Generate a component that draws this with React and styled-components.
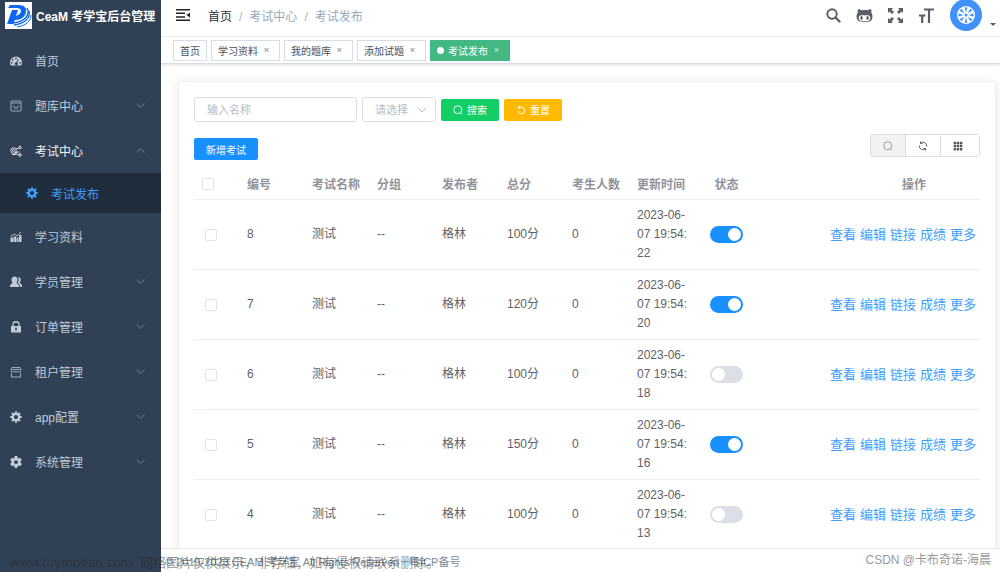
import React from "react";
import styled, { createGlobalStyle } from "styled-components";
import { FaGithubAlt } from "react-icons/fa";
import { FaGear } from "react-icons/fa6";
import { BsGrid3X3GapFill } from "react-icons/bs";

const GlobalStyle = createGlobalStyle`
  * {
    box-sizing: border-box;
  }
  body {
    margin: 0;
    overflow: hidden;
    background: #fff;
    color: #606266;
    font-family: "Liberation Sans", "Noto Sans CJK SC", sans-serif;
    font-size: 12px;
  }
  button, input, select {
    font-family: inherit;
  }
  svg {
    display: block;
    flex: none;
  }
`;

// icons
const LogoIcon = () => (
  <svg width="27" height="27" viewBox="0 0 27 27">
    <rect width="27" height="27" fill="#fff" />
    <path
      fillRule="evenodd"
      d="M5 3h9c5 0 8 3 7 7c-1 5-5 8-11 8L8 22H2L7 8h6l-2 6c3-1 5-3 5-5c0-2-2-3-4-3H3z"
      fill="#0d66f2"
    />
    <path d="M22 6c4 7-3 14-14 15" fill="none" stroke="#0d66f2" strokeWidth="1.500" />
    <path d="M24 9c2 7-5 13-15 14" fill="none" stroke="#0d66f2" strokeWidth="1.300" />
    <path d="M26 13c0 6-6 11-14 12" fill="none" stroke="#0d66f2" strokeWidth="1" />
  </svg>
);

const DashboardIcon = () => (
  <svg width="12" height="12" viewBox="0 0 24 24" fill="currentColor">
    <path
      fillRule="evenodd"
      d="M12 3a12 12 0 0 0-12 12c0 2 .6 4 1.600 6h20.800c1-2 1.600-4 1.600-6a12 12 0 0 0-12-12zM12 5a1.700 1.700 0 1 1 0 3.400a1.700 1.700 0 1 1 0-3.400zM5.500 8a1.700 1.700 0 1 1 0 3.400a1.700 1.700 0 1 1 0-3.400zM3.500 14a1.700 1.700 0 1 1 0 3.400a1.700 1.700 0 1 1 0-3.400zM20.500 14a1.700 1.700 0 1 1 0 3.400a1.700 1.700 0 1 1 0-3.400zM16 8l1.500.6l-3 6.400a3 3 0 1 1-2-.6z"
    />
  </svg>
);

const BagIcon = () => (
  <svg width="12" height="12" viewBox="0 0 24 24" fill="none" stroke="currentColor" strokeWidth="1.500">
    <rect x="2" y="2" width="20" height="20" rx="1" />
    <path d="M2 6h20M8 11v2a4 4 0 0 0 8 0v-2" />
  </svg>
);

const ExamIcon = () => (
  <svg width="12" height="12" viewBox="0 0 24 24" fill="none" stroke="currentColor" strokeWidth="1.800">
    <circle cx="7" cy="11" r="5.500" />
    <circle cx="7" cy="11" r="2" />
    <circle cx="20" cy="5" r="2.500" />
    <circle cx="20" cy="20" r="2.500" />
    <path d="M12 8l5.500-2M4 19h7l2-5h6M11 17l6 3" />
  </svg>
);

const ChartIcon = () => (
  <svg width="12" height="12" viewBox="0 0 24 24" fill="currentColor">
    <path d="M1 13h5v9H1zM7 11h5v11H7zM13 13h4v9h-4zM18 8h5v14h-5z" />
    <path d="M1 11l8-5l5 4l8-8" fill="none" stroke="currentColor" strokeWidth="1.800" />
  </svg>
);

const PeopleIcon = () => (
  <svg width="12" height="12" viewBox="0 0 24 24" fill="currentColor">
    <path d="M9 1c4 0 6 3 6 6c0 3-1 5-2 6.500c0 2 5 3 5 6v2.500H0v-2.500c0-3 5-4 5-6C4 12 3 10 3 7c0-3 2-6 6-6z" />
    <path d="M16 2c4 0 5.500 3 5.500 5.500c0 2.500-1 4-2 5.500c0 2 4.500 3 4.500 6v3h-4c0-5-2-6-4.500-8c2-3 3-7 .500-12z" />
  </svg>
);

const LockIcon = () => (
  <svg width="12" height="12" viewBox="0 0 24 24" fill="currentColor">
    <path
      fillRule="evenodd"
      d="M2 10h20v13H2zM12 13a2 2 0 0 0-1 3.700V20h2v-3.300A2 2 0 0 0 12 13z"
    />
    <path d="M6 10V7a6 5.500 0 0 1 12 0v3" fill="none" stroke="currentColor" strokeWidth="2.600" />
  </svg>
);

const ShopIcon = () => (
  <svg width="12" height="12" viewBox="0 0 24 24" fill="none" stroke="currentColor" strokeWidth="1.600">
    <path d="M4 3h16l2 6c0 4-5 4-6.500 1c-1 3-6 3-7 0C7 13 2 13 2 9zM3 14v8h18v-8M5 7h14" />
  </svg>
);

const GearIcon = () => (
  <svg width="12" height="12" viewBox="0 0 24 24" fill="none" stroke="currentColor">
    <circle cx="12" cy="12" r="6.300" strokeWidth="4.400" />
    {[0, 45, 90, 135, 180, 225, 270, 315].map((angle) => (
      <path key={angle} d="M12 0.500V5" strokeWidth="4.200" transform={`rotate(${angle} 12 12)`} />
    ))}
  </svg>
);

const Chevron = ({ up, size = 9 }) => (
  <svg width={size} height={size} viewBox="0 0 12 12" fill="none" stroke="currentColor" strokeWidth="1.200">
    <path d={up ? "M1 8.500l5-5l5 5" : "M1 3.500l5 5l5-5"} />
  </svg>
);

const FoldIcon = () => (
  <svg width="14" height="14" viewBox="0 0 14 14" fill="#222">
    <path d="M0 1h14v1.500H0zM0 4.600h9v1.500H0zM0 8.200h9v1.500H0zM0 11.600h14v1.500H0zM14 4.400v5.200L10.500 7z" />
  </svg>
);

const SearchIcon = () => (
  <svg width="15" height="15" viewBox="0 0 15 15" fill="none" stroke="currentColor">
    <circle cx="6" cy="6" r="4.700" strokeWidth="1.900" />
    <path d="M9.500 9.500L13.500 13.500" strokeWidth="2.300" strokeLinecap="round" />
  </svg>
);

const FullscreenIcon = () => (
  <svg width="15" height="15" viewBox="0 0 15 15" fill="currentColor">
    <path d="M0 0h5L3.500 1.500L6 4L4 6L1.500 3.500L0 5zM15 0v5l-1.500-1.500L11 6L9 4l2.500-2.500L10 0zM0 15v-5l1.500 1.500L4 9l2 2l-2.500 2.500L5 15zM15 15h-5l1.500-1.500L9 11l2-2l2.500 2.500L15 10z" />
  </svg>
);

const FontSizeIcon = () => (
  <svg width="15" height="15" viewBox="0 0 15 15" fill="none" stroke="currentColor" strokeWidth="2.200">
    <path d="M5 1.500h10M10 1v14M0 7.500h6.500M3.200 7v8" />
  </svg>
);

const WheelIcon = () => (
  <svg width="32" height="32" viewBox="0 0 32 32">
    <circle cx="16" cy="16" r="16" fill="#4191fb" />
    <circle cx="16" cy="16" r="9" fill="#fff" />
    {[0, 45, 90, 135, 180, 225, 270, 315].map((angle) => (
      <path key={angle} d="M16 13.500L14.600 8.600Q16 8 17.400 8.600z" fill="#4191fb" transform={`rotate(${angle} 16 16)`} />
    ))}
    <circle cx="16" cy="16" r="1.500" fill="#4191fb" />
  </svg>
);

const ThinSearchIcon = () => (
  <svg width="10" height="10" viewBox="0 0 20 20" fill="none" stroke="currentColor" strokeWidth="1.800">
    <circle cx="9.500" cy="9.500" r="8" />
    <path d="M14.500 15.500l3.500 3.500" />
  </svg>
);

const ResetIcon = () => (
  <svg width="10" height="10" viewBox="0 0 20 20" fill="none" stroke="currentColor" strokeWidth="2">
    <path d="M4 4.500h7a6.500 6.500 0 1 1-6.500 8M7.500 1L4 4.500L7.500 8" />
  </svg>
);

const RefreshIcon = () => (
  <svg width="10" height="10" viewBox="0 0 20 20" fill="none" stroke="currentColor" strokeWidth="1.800">
    <path d="M5 4.500a7.500 7.500 0 0 1 12.500 5.500v1M15 15.500A7.500 7.500 0 0 1 2.500 10V9M5 1v4h4M15 19v-4h-4" />
  </svg>
);

const menu = [
  { label: "首页", icon: <DashboardIcon /> },
  { label: "题库中心", icon: <BagIcon />, group: true },
  { label: "考试中心", icon: <ExamIcon />, group: true, open: true },
  { label: "学习资料", icon: <ChartIcon /> },
  { label: "学员管理", icon: <PeopleIcon />, group: true },
  { label: "订单管理", icon: <LockIcon />, group: true },
  { label: "租户管理", icon: <ShopIcon />, group: true },
  { label: "app配置", icon: <GearIcon />, group: true },
  { label: "系统管理", icon: <FaGear size={12} />, group: true },
];

const tags = ["首页", "学习资料", "我的题库", "添加试题", "考试发布"];

const exams = [
  { id: 8, score: "100分", time: "2023-06-07 19:54:22", on: true },
  { id: 7, score: "120分", time: "2023-06-07 19:54:20", on: true },
  { id: 6, score: "100分", time: "2023-06-07 19:54:18", on: false },
  { id: 5, score: "150分", time: "2023-06-07 19:54:16", on: true },
  { id: 4, score: "100分", time: "2023-06-07 19:54:13", on: false },
];

const App = () => {
  return (
    <Layout>
      <GlobalStyle />
      <Sidebar>
        <Brand href="#">
          <LogoIcon />
          CeaM 考学宝后台管理
        </Brand>
        {menu.map((item) => (
          <React.Fragment key={item.label}>
            <MenuItem href="#" $open={item.open}>
              {item.icon}
              <MenuLabel>{item.label}</MenuLabel>
              {item.group && (
                <MenuArrow>
                  <Chevron up={item.open} />
                </MenuArrow>
              )}
            </MenuItem>
            {item.open && (
              <SubItem href="#">
                <GearIcon />
                <MenuLabel>考试发布</MenuLabel>
              </SubItem>
            )}
          </React.Fragment>
        ))}
      </Sidebar>
      <Main>
        <Navbar>
          <IconButton aria-label="fold">
            <FoldIcon />
          </IconButton>
          <Breadcrumb>
            <Crumb href="#" $first>首页</Crumb>
            <Slash>/</Slash>
            <Crumb href="#">考试中心</Crumb>
            <Slash>/</Slash>
            <Crumb href="#">考试发布</Crumb>
          </Breadcrumb>
          <NavTools>
            <IconButton aria-label="search">
              <SearchIcon />
            </IconButton>
            <IconButton aria-label="github">
              <FaGithubAlt size={17} />
            </IconButton>
            <IconButton aria-label="fullscreen">
              <FullscreenIcon />
            </IconButton>
            <IconButton aria-label="size">
              <FontSizeIcon />
            </IconButton>
            <AvatarButton aria-label="user">
              <WheelIcon />
              <Caret />
            </AvatarButton>
          </NavTools>
        </Navbar>
        <TagsBar>
          {tags.map((tag, i) => (
            <Tag key={tag} $active={i === tags.length - 1}>
              {i === tags.length - 1 && <Dot />}
              {tag}
              {i > 0 && <TagClose aria-label={`close ${tag}`}>×</TagClose>}
            </Tag>
          ))}
        </TagsBar>
        <Content>
          <Card>
            <Filters>
              <NameInput type="text" placeholder="输入名称" aria-label="输入名称" />
              <SelectBox>
                <Select aria-label="请选择" defaultValue="">
                  <option value="">请选择</option>
                </Select>
                <SelectArrow>
                  <Chevron size={10} />
                </SelectArrow>
              </SelectBox>
              <Button $color="#13ce66">
                <ThinSearchIcon />
                搜索
              </Button>
              <Button $color="#ffba00">
                <ResetIcon />
                重置
              </Button>
            </Filters>
            <Toolbar>
              <Button $color="#1890ff">新增考试</Button>
              <ToolGroup>
                <ToolButton aria-label="搜索" $pressed>
                  <ThinSearchIcon />
                </ToolButton>
                <ToolButton aria-label="刷新">
                  <RefreshIcon />
                </ToolButton>
                <ToolButton aria-label="列" $wide>
                  <BsGrid3X3GapFill size={10} />
                </ToolButton>
              </ToolGroup>
            </Toolbar>
            <Table>
              <colgroup>
                <Col $width={44} />
                <Col $width={65} />
                <Col $width={65} />
                <Col $width={65} />
                <Col $width={65} />
                <Col $width={65} />
                <Col $width={65} />
                <Col $width={65} />
                <Col $width={62} />
                <col />
              </colgroup>
              <thead>
                <tr>
                  <CheckTh>
                    <Checkbox type="checkbox" aria-label="全选" />
                  </CheckTh>
                  <Th>编号</Th>
                  <Th>考试名称</Th>
                  <Th>分组</Th>
                  <Th>发布者</Th>
                  <Th>总分</Th>
                  <Th>考生人数</Th>
                  <Th>更新时间</Th>
                  <Th $center>状态</Th>
                  <ActionTh>操作</ActionTh>
                </tr>
              </thead>
              <tbody>
                {exams.map((exam) => (
                  <tr key={exam.id}>
                    <CheckTd>
                      <Checkbox type="checkbox" aria-label={`选择 ${exam.id}`} />
                    </CheckTd>
                    <Td>{exam.id}</Td>
                    <Td>测试</Td>
                    <Td>--</Td>
                    <Td>格林</Td>
                    <Td>{exam.score}</Td>
                    <Td>0</Td>
                    <Td>{exam.time}</Td>
                    <Td $center>
                      <Switch type="checkbox" role="switch" aria-label="状态" defaultChecked={exam.on} />
                    </Td>
                    <Td>
                      <Actions>
                        <ActionLink href="#">查看</ActionLink>
                        <ActionLink href="#">编辑</ActionLink>
                        <ActionLink href="#">链接</ActionLink>
                        <ActionLink href="#">成绩</ActionLink>
                        <ActionLink href="#">更多</ActionLink>
                      </Actions>
                    </Td>
                  </tr>
                ))}
              </tbody>
            </Table>
          </Card>
        </Content>
        <Footer>© 2019-2023 CEAM 考学宝 All Rights Reserved · 粤ICP备号</Footer>
      </Main>
      <SiteMark>
        <SiteName>www.toymoban.com</SiteName>
        网络图片仅供展示，非存储，如有侵权请联系删除。
      </SiteMark>
      <AuthorMark>CSDN @卡布奇诺-海晨</AuthorMark>
    </Layout>
  );
};

const Layout = styled.div`
  position: relative;
  display: flex;
  height: 100vh;
  overflow: hidden;
`;

const Sidebar = styled.nav`
  width: 161px;
  flex: none;
  background: #304156;
`;

const Brand = styled.a`
  display: flex;
  align-items: center;
  gap: 4px;
  height: 38px;
  padding: 0 0 7px 5px;
  color: #fff;
  font-size: 12px;
  font-weight: bold;
  white-space: nowrap;
  text-decoration: none;
`;

const MenuItem = styled.a`
  display: flex;
  align-items: center;
  gap: 13px;
  height: 45px;
  padding: 0 16px 0 10px;
  color: ${({ $open }) => ($open ? "#f4f4f5" : "#bfcbd9")};
  text-decoration: none;
`;

const SubItem = styled(MenuItem)`
  height: 40px;
  margin-bottom: 1px;
  padding-left: 26px;
  background: #1f2d3d;
  color: #409eff;
`;

const MenuLabel = styled.span`
  flex: 1;
`;

const MenuArrow = styled.span`
  color: #76859a;
`;

const Main = styled.main`
  flex: 1;
  min-width: 0;
  display: flex;
  flex-direction: column;
`;

const Navbar = styled.header`
  display: flex;
  align-items: center;
  flex: none;
  height: 37px;
  padding: 0 4px 6px 14px;
  border-bottom: 1px solid #f0f1f3;
`;

const IconButton = styled.button`
  display: flex;
  align-items: center;
  justify-content: center;
  width: 15px;
  height: 15px;
  padding: 0;
  border: 0;
  background: none;
  color: #5a5e66;
  cursor: pointer;
`;

const Breadcrumb = styled.nav`
  display: flex;
  align-items: baseline;
  gap: 7px;
  margin-left: 18px;
`;

const Crumb = styled.a`
  color: ${({ $first }) => ($first ? "#303133" : "#97a8be")};
  text-decoration: none;
`;

const Slash = styled.span`
  color: #a9b0bb;
`;

const NavTools = styled.div`
  display: flex;
  align-items: center;
  gap: 16px;
  margin-left: auto;
`;

const AvatarButton = styled.button`
  display: flex;
  align-items: flex-end;
  gap: 8px;
  padding: 0;
  border: 0;
  background: none;
  cursor: pointer;
`;

const Caret = styled.span`
  margin-bottom: 5px;
  border: 3px solid transparent;
  border-top-color: #5a5e66;
  border-bottom: 0;
`;

const TagsBar = styled.div`
  display: flex;
  align-items: center;
  gap: 4px;
  flex: none;
  height: 27px;
  padding: 0 12px;
  border-bottom: 1px solid #d8dce5;
  box-shadow: 0 1px 3px rgba(0, 0, 0, 0.12);
`;

const Tag = styled.div`
  display: flex;
  align-items: center;
  height: 21px;
  padding: 0 6px;
  border: 1px solid ${({ $active }) => ($active ? "#42b983" : "#d8dce5")};
  background: ${({ $active }) => ($active ? "#42b983" : "#fff")};
  color: ${({ $active }) => ($active ? "#fff" : "#495060")};
  font-size: 10px;
`;

const Dot = styled.span`
  width: 7px;
  height: 7px;
  margin-right: 4px;
  border-radius: 50%;
  background: #fff;
`;

const TagClose = styled.button`
  width: 9px;
  margin: 0 2px 0 4px;
  padding: 0;
  border: 0;
  background: none;
  color: inherit;
  font-size: 9px;
  opacity: 0.7;
`;

const Content = styled.div`
  flex: 1;
  min-height: 0;
  padding: 17px 4px 0 17px;
  overflow: hidden;
`;

const Card = styled.section`
  padding: 15px;
  border: 1px solid #ebeef5;
  border-radius: 3px;
  background: #fff;
  box-shadow: 0 2px 12px rgba(0, 0, 0, 0.1);
`;

const Filters = styled.form`
  display: flex;
  align-items: center;
  gap: 5px;
`;

const NameInput = styled.input`
  width: 163px;
  height: 25px;
  padding: 0 12px;
  border: 1px solid #dcdfe6;
  border-radius: 3px;
  outline: 0;
  font-size: 11px;

  &::placeholder {
    color: #b8bcc5;
  }
`;

const SelectBox = styled.div`
  position: relative;
`;

const Select = styled.select`
  width: 74px;
  height: 25px;
  padding: 0 12px;
  border: 1px solid #dcdfe6;
  border-radius: 3px;
  background: #fff;
  color: #b8bcc5;
  font-size: 11px;
  appearance: none;
`;

const SelectArrow = styled.span`
  position: absolute;
  top: 8px;
  right: 9px;
  color: #b8bcc5;
  pointer-events: none;
`;

const Button = styled.button.attrs({ type: "button" })`
  display: flex;
  align-items: center;
  gap: 4px;
  height: 22px;
  padding: 0 12px;
  border: 0;
  border-radius: 2px;
  background: ${({ $color }) => $color};
  color: #fff;
  font-size: 10px;
  cursor: pointer;
`;

const Toolbar = styled.div`
  display: flex;
  align-items: flex-end;
  justify-content: space-between;
  height: 26px;
  margin: 12px 0 8px;
`;

const ToolGroup = styled.div`
  display: flex;
  align-self: flex-start;
  height: 23px;
  border: 1px solid #dcdfe6;
  border-radius: 3px;
  overflow: hidden;
`;

const ToolButton = styled.button`
  display: flex;
  align-items: center;
  padding: 0 ${({ $wide }) => ($wide ? "16px" : "12px")} 0 12px;
  border: 0;
  background: ${({ $pressed }) => ($pressed ? "#f2f2f2" : "#fff")};
  color: ${({ $pressed }) => ($pressed ? "#909399" : "#555")};

  & + & {
    border-left: 1px solid #dcdfe6;
  }
`;

const Table = styled.table`
  width: 100%;
  table-layout: fixed;
  border-collapse: separate;
  border-spacing: 0;
`;

const Col = styled.col`
  width: ${({ $width }) => $width}px;
`;

const Th = styled.th`
  height: 32px;
  padding: 0 4px 0 9px;
  border-bottom: 1px solid #ebeef5;
  color: #909399;
  text-align: ${({ $center }) => ($center ? "center" : "left")};
  white-space: nowrap;
`;

const CheckTh = styled(Th)`
  padding-left: 8px;
`;

const ActionTh = styled(Th)`
  padding-right: 54px;
  text-align: right;
`;

const Td = styled.td`
  height: 70px;
  padding: 0 4px 0 9px;
  border-bottom: 1px solid #ebeef5;
  line-height: 19px;
  text-align: ${({ $center }) => ($center ? "center" : "left")};
  word-break: break-all;
`;

const CheckTd = styled(Td)`
  padding-left: 11px;
`;

const Checkbox = styled.input`
  display: block;
  width: 12px;
  height: 12px;
  margin: 0;
  border: 1px solid #e0e3ea;
  border-radius: 2px;
  background: #fff;
  appearance: none;

  &:checked {
    background: #1890ff;
  }
`;

const Switch = styled.input`
  display: inline-flex;
  align-items: center;
  width: 33px;
  height: 17px;
  margin: 0;
  padding: 0 2px;
  border-radius: 9px;
  background: #dcdfe6;
  appearance: none;
  vertical-align: middle;

  &::before {
    content: "";
    width: 13px;
    height: 13px;
    border-radius: 50%;
    background: #fff;
  }

  &:checked {
    justify-content: flex-end;
    background: #1890ff;
  }
`;

const Actions = styled.div`
  display: flex;
  justify-content: flex-end;
  gap: 4px;
`;

const ActionLink = styled.a`
  color: #409eff;
  font-size: 13px;
  text-decoration: none;
`;

const Footer = styled.footer`
  position: relative;
  flex: none;
  height: 24px;
  padding: 3px 4px 0;
  border-top: 1px solid #e7eaec;
  background: #fff;
  color: #7a8b9a;
  font-size: 11px;
  line-height: 20px;
`;

const SiteMark = styled.div`
  position: absolute;
  left: 10px;
  bottom: 0;
  display: flex;
  align-items: center;
  gap: 8px;
  color: rgba(40, 40, 40, 0.5);
  font-size: 13px;
  line-height: 18px;
`;

const SiteName = styled.span`
  font-family: "DejaVu Sans", sans-serif;
  font-size: 12px;
`;

const AuthorMark = styled.div`
  position: absolute;
  right: 9px;
  bottom: 3px;
  color: #999;
  font-size: 12px;
  line-height: 18px;
`;

export default App;
